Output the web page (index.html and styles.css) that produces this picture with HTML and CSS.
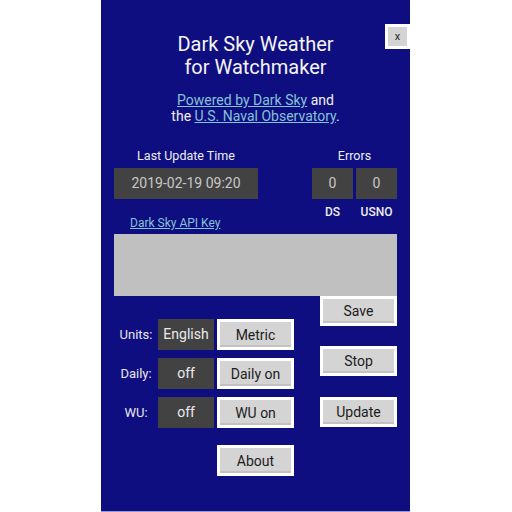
FILE: index.html
```html
<!DOCTYPE html>
<html lang="en">
<head>
    <meta charset="UTF-8">
    <meta name="viewport" content="width=device-width, initial-scale=1.0">
    <title>Dark Sky Weather for Watchmaker</title>
    <link rel="stylesheet" href="styles.css">
</head>
<body>
    <div class="panel">
        <button class="close">x</button>
        <h1 class="title">Dark Sky Weather<br>for Watchmaker</h1>
        <p class="credits"><a href="#">Powered by Dark Sky</a> and<br>the <a href="#">U.S. Naval Observatory</a>.</p>

        <div class="status">
            <div class="last">
                <div class="cap">Last Update Time</div>
                <div class="readout">2019-02-19 09:20</div>
                <a class="api-link" href="#">Dark Sky API Key</a>
            </div>
            <div class="errors">
                <div class="cap">Errors</div>
                <div class="counts">
                    <div class="readout">0</div>
                    <div class="readout">0</div>
                </div>
                <div class="counts labels">
                    <span>DS</span>
                    <span>USNO</span>
                </div>
            </div>
        </div>

        <div class="key-box"></div>

        <div class="controls">
            <div class="options">
                <div class="row">
                    <span class="label">Units:</span>
                    <div class="state">English</div>
                    <button class="button">Metric</button>
                </div>
                <div class="row">
                    <span class="label">Daily:</span>
                    <div class="state">off</div>
                    <button class="button">Daily on</button>
                </div>
                <div class="row">
                    <span class="label">WU:</span>
                    <div class="state">off</div>
                    <button class="button">WU on</button>
                </div>
                <div class="row about">
                    <button class="button">About</button>
                </div>
            </div>
            <div class="actions">
                <button class="button">Save</button>
                <button class="button">Stop</button>
                <button class="button update">Update</button>
            </div>
        </div>
    </div>
</body>
</html>
```

FILE: styles.css
```css
body {
    margin: 0;
    background-color: #ffffff;
    font-family: Roboto, "Noto Sans", sans-serif;
}
.panel {
    position: relative;
    box-sizing: border-box;
    width: 309px;
    height: 512px;
    margin-left: 101px;
    padding: 33px 13px 0;
    background-color: #0f0e80;
    border-bottom: 1px solid #9a9ad0;
    color: #eeeeee;
}
.close {
    position: absolute;
    top: 24px;
    left: 284px;
    width: 25px;
    height: 25px;
    padding: 0;
    border: 3px solid #ffffff;
    background-color: #d4d4d4;
    color: #222222;
    font-family: Roboto, sans-serif;
    font-size: 11px;
}
.title {
    margin: 0;
    font-size: 20px;
    font-weight: normal;
    line-height: 23px;
    text-align: center;
    color: #f4f4f4;
}
.credits {
    margin: 13px 0 0;
    font-size: 14px;
    line-height: 16px;
    text-align: center;
    color: #f0f0f0;
}
a {
    color: #84c2d6;
}
.status {
    display: flex;
    justify-content: space-between;
    margin-top: 24px;
}
.cap {
    font-size: 12.5px;
    line-height: 15px;
    text-align: center;
    margin-bottom: 5px;
}
.readout {
    height: 31px;
    background-color: #424242;
    color: #c8c8c8;
    font-size: 14px;
    line-height: 31px;
    text-align: center;
}
.last {
    width: 144px;
}
.api-link {
    display: block;
    margin: 17px 0 0 16px;
    font-size: 12px;
    line-height: 15px;
}
.errors {
    width: 85px;
}
.counts {
    display: flex;
    gap: 3px;
}
.counts .readout {
    flex: 1;
}
.labels {
    margin-top: 6px;
    font-size: 12px;
    font-weight: 500;
    line-height: 15px;
}
.labels span {
    flex: 1;
    text-align: center;
}
.key-box {
    height: 62px;
    margin-top: 3px;
    background-color: #c0c0c0;
}
.controls {
    display: flex;
    justify-content: space-between;
}
.options {
    display: flex;
    flex-direction: column;
    gap: 8px;
    padding-top: 23px;
}
.row {
    display: flex;
    align-items: center;
}
.label {
    width: 44px;
    font-size: 13px;
    text-align: center;
    color: #e8e8e8;
}
.state {
    width: 56px;
    height: 31px;
    margin-right: 3px;
    background-color: #424242;
    color: #ececec;
    font-size: 14px;
    line-height: 31px;
    text-align: center;
}
.about {
    margin-top: 9px;
    padding-left: 103px;
}
.actions {
    display: flex;
    flex-direction: column;
    gap: 20px;
}
.button {
    box-sizing: border-box;
    width: 77px;
    height: 31px;
    padding: 0;
    border: 3px solid #ffffff;
    background-color: #d4d4d4;
    box-shadow: inset 0 -2px 0 #c2c2c2;
    color: #1c1c1c;
    font-family: Roboto, sans-serif;
    font-size: 14px;
}
.actions .button {
    height: 30px;
}
.actions .update {
    margin-top: 1px;
}
```
